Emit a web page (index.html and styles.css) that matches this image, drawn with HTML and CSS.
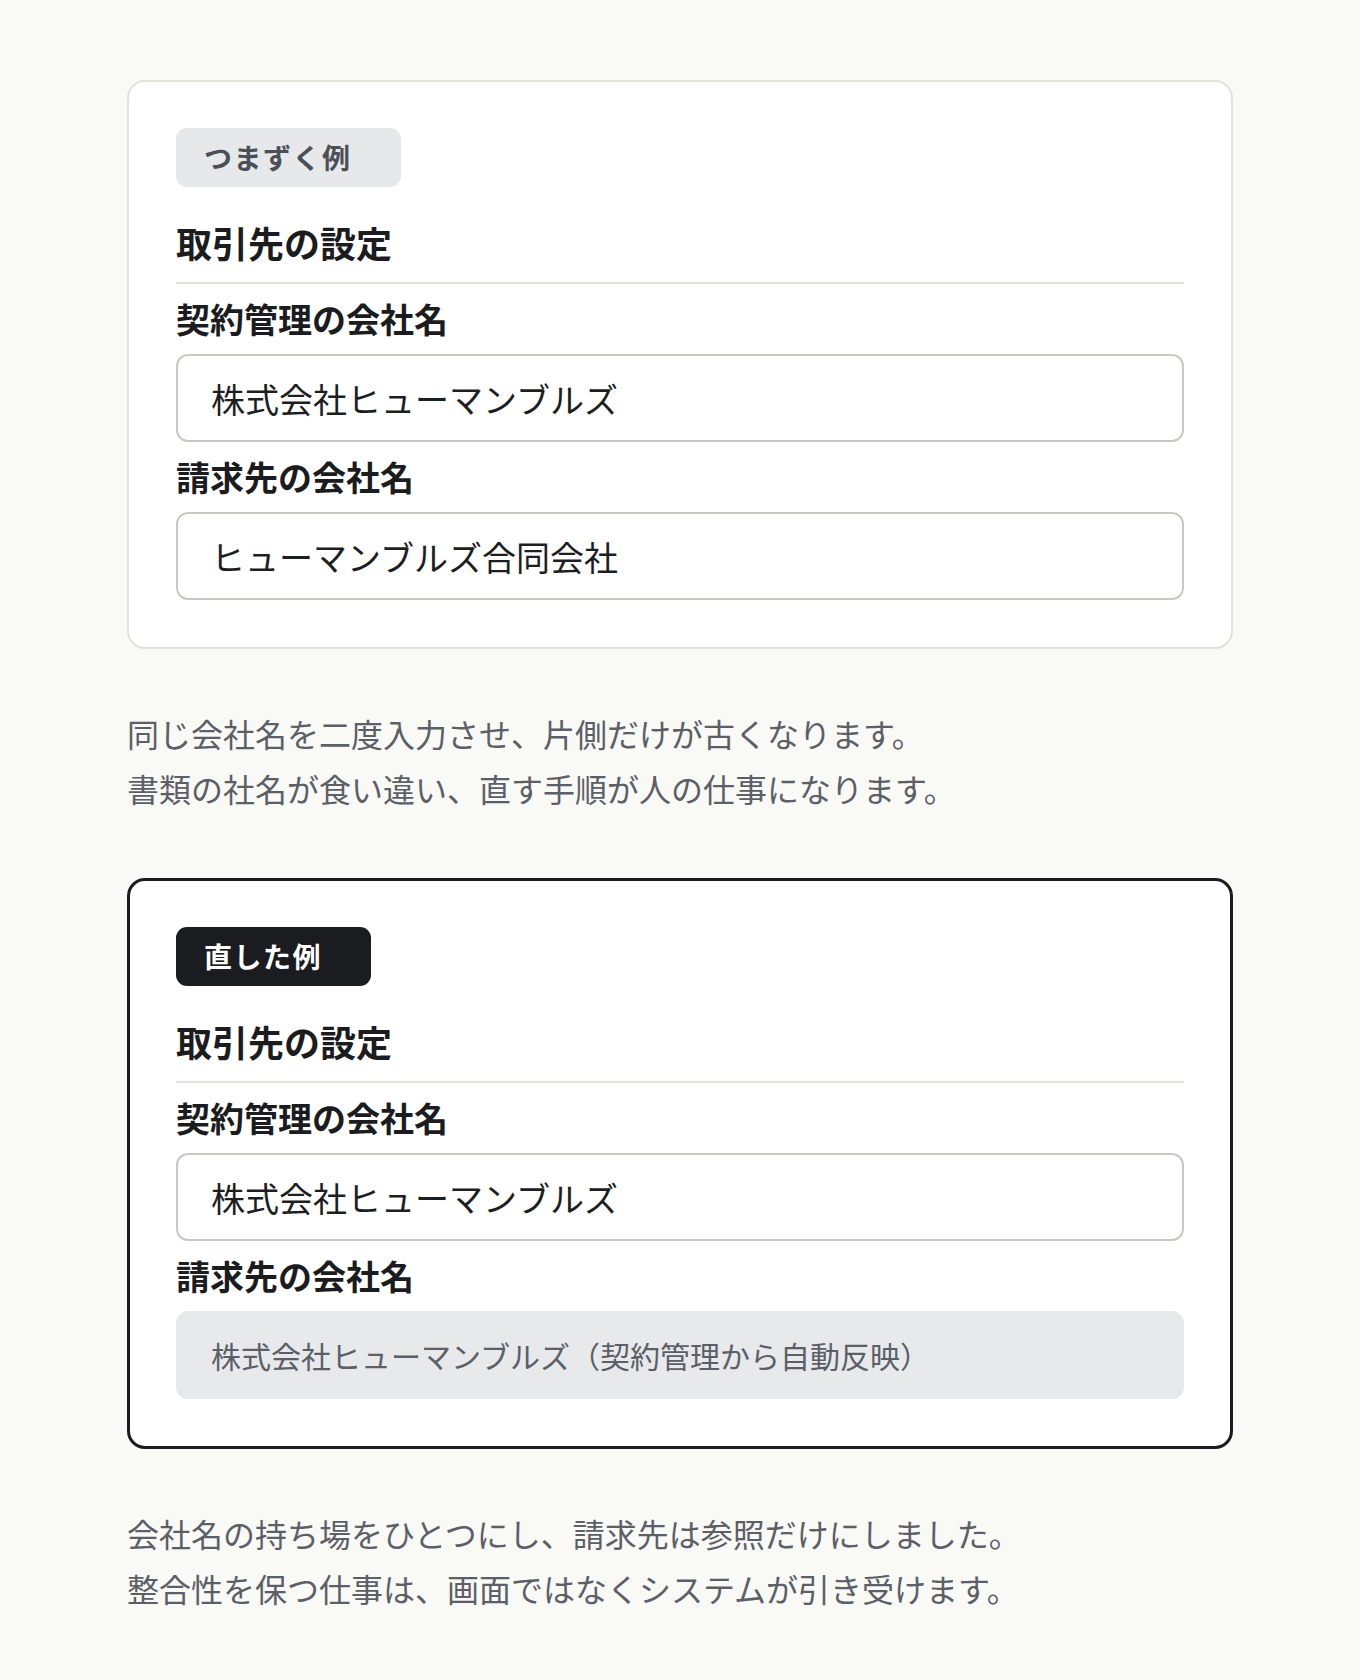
FILE: index.html
```html
<!DOCTYPE html>
<html lang="ja">
<head>
    <meta charset="UTF-8">
    <meta name="viewport" content="width=device-width, initial-scale=1.0">
    <title>取引先の設定</title>
    <link rel="stylesheet" href="styles.css">
</head>
<body>
    <main class="page">
        <section class="card">
            <span class="tag">つまずく例</span>
            <h2 class="card-title">取引先の設定</h2>
            <div class="field">
                <label class="field-label">契約管理の会社名</label>
                <div class="input">株式会社ヒューマンブルズ</div>
            </div>
            <div class="field">
                <label class="field-label">請求先の会社名</label>
                <div class="input">ヒューマンブルズ合同会社</div>
            </div>
        </section>

        <p class="note">
            同じ会社名を二度入力させ、片側だけが古くなります。<br>
            書類の社名が食い違い、直す手順が人の仕事になります。
        </p>

        <section class="card card-good">
            <span class="tag tag-dark">直した例</span>
            <h2 class="card-title">取引先の設定</h2>
            <div class="field">
                <label class="field-label">契約管理の会社名</label>
                <div class="input">株式会社ヒューマンブルズ</div>
            </div>
            <div class="field">
                <label class="field-label">請求先の会社名</label>
                <div class="input input-readonly">株式会社ヒューマンブルズ（契約管理から自動反映）</div>
            </div>
        </section>

        <p class="note">
            会社名の持ち場をひとつにし、請求先は参照だけにしました。<br>
            整合性を保つ仕事は、画面ではなくシステムが引き受けます。
        </p>
    </main>
</body>
</html>
```

FILE: styles.css
```css
body {
    margin: 0;
    background-color: #f9f9f5;
    color: #1b1c20;
    font-family: "Noto Sans CJK JP", "Noto Sans", sans-serif;
}
.page {
    width: 1106px;
    margin: 0 auto;
    padding: 80px 0 60px;
}
.card {
    background-color: #fff;
    border: 2px solid #e3e3dc;
    border-radius: 18px;
    padding: 46px 47px 47px 47px;
}
.card-good {
    border: 3px solid #1b1c20;
    padding: 46px 46px 47px;
}
.tag {
    display: inline-block;
    padding: 13px 49px 14px 28px;
    border-radius: 11px;
    background-color: #e7e8ea;
    color: #4b4f58;
    font-size: 28px;
    line-height: 32px;
    font-weight: 700;
    letter-spacing: 1.5px;
}
.tag-dark {
    background-color: #1b1c20;
    color: #fff;
}
.card-title {
    margin: 30px 0 0;
    padding-bottom: 15px;
    border-bottom: 2px solid #e3e3dc;
    font-size: 36px;
    line-height: 50px;
    font-weight: 700;
}
.field-label {
    display: block;
    margin: 11px 0;
    font-size: 34px;
    line-height: 48px;
    font-weight: 700;
}
.input {
    box-sizing: border-box;
    height: 88px;
    display: flex;
    align-items: center;
    padding: 0 33px;
    border: 2px solid #c9c9c1;
    border-radius: 12px;
    font-size: 34px;
    color: #1d1e22;
}
.input-readonly {
    border-color: #e8e9eb;
    background-color: #e8e9eb;
    color: #5b5f68;
    font-size: 30px;
}
.note {
    margin: 57px 0 62px;
    color: #5c5f68;
    font-size: 32px;
    line-height: 55px;
}
.note:last-child {
    margin-bottom: 0;
}
```
